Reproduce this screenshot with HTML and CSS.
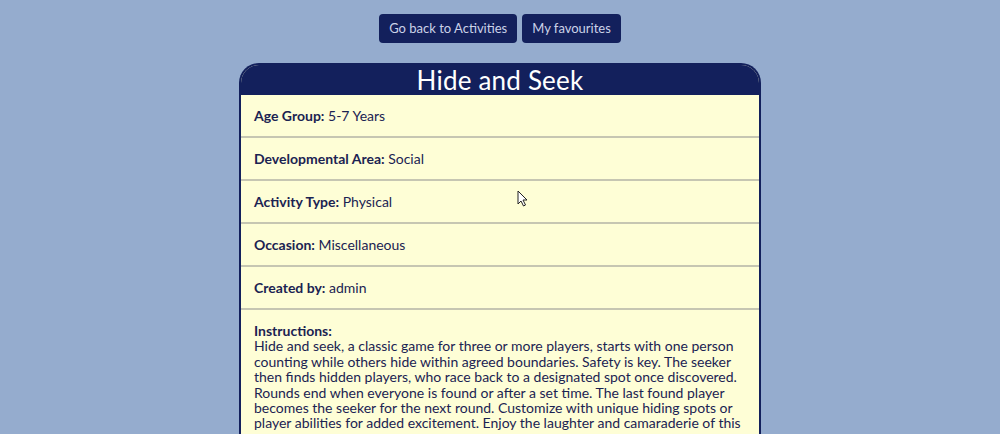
FILE: index.html
```html
<!DOCTYPE html>
<html lang="en">
<head>
<meta charset="utf-8">
<title>Hide and Seek</title>
<link rel="stylesheet" href="styles.css">
</head>
<body>
<div class="page">
  <nav class="actions">
    <a class="btn" href="#">Go back to Activities</a>
    <a class="btn" href="#">My favourites</a>
  </nav>
  <section class="card">
    <h1 class="card-title">Hide and Seek</h1>
    <div class="row"><b>Age Group:</b> 5-7 Years</div>
    <div class="row"><b>Developmental Area:</b> Social</div>
    <div class="row"><b>Activity Type:</b> Physical</div>
    <div class="row"><b>Occasion:</b> Miscellaneous</div>
    <div class="row"><b>Created by:</b> admin</div>
    <div class="row instructions"><b>Instructions:</b><br>Hide and seek, a classic game for three or more players, starts with one person counting while others hide within agreed boundaries. Safety is key. The seeker then finds hidden players, who race back to a designated spot once discovered. Rounds end when everyone is found or after a set time. The last found player becomes the seeker for the next round. Customize with unique hiding spots or player abilities for added excitement. Enjoy the laughter and camaraderie of this timeless game while practicing teamwork.</div>
  </section>
</div>
<svg class="cursor" width="12" height="18" viewBox="0 0 12 18"><path d="M1 1 L1 14 L4 11 L6.5 16 L8.5 15 L6 10 L10 10 Z" fill="#fff" stroke="#222" stroke-width="1"/></svg>
</body>
</html>
```
FILE: styles.css
```css
html, body {
  margin: 0;
  padding: 0;
  background: #95acce;
  height: 100%;
  overflow: hidden;
}
body {
  font-family: Lato, "Noto Sans", sans-serif;
  color: #1b2352;
}
.page {
  display: flex;
  flex-direction: column;
  align-items: center;
  padding-top: 14px;
}
.actions {
  display: flex;
  gap: 5px;
  justify-content: center;
}
.btn {
  display: block;
  background: #13205c;
  color: #cbd2e8;
  text-decoration: none;
  font-size: 13px;
  line-height: 17px;
  padding: 6px 10px;
  border-radius: 4px;
}
.card {
  margin-top: 20px;
  width: 518px;
  border: 2px solid #13205c;
  border-bottom: none;
  border-radius: 20px 20px 0 0;
  background: #fefed6;
  overflow: hidden;
}
.card-title {
  margin: 0;
  background: #13205c;
  color: #ffffff;
  text-align: center;
  font-weight: 400;
  font-size: 26px;
  line-height: 30px;
  letter-spacing: 0.2px;
}
.row {
  font-size: 14px;
  line-height: 17px;
  padding: 12px 13px;
  border-bottom: 2px solid #c6c6b2;
}
.row b {
  font-weight: 700;
}
.instructions {
  line-height: 15.4px;
  padding-top: 13px;
  border-bottom: none;
}
.cursor {
  position: absolute;
  left: 517px;
  top: 190px;
}
```
